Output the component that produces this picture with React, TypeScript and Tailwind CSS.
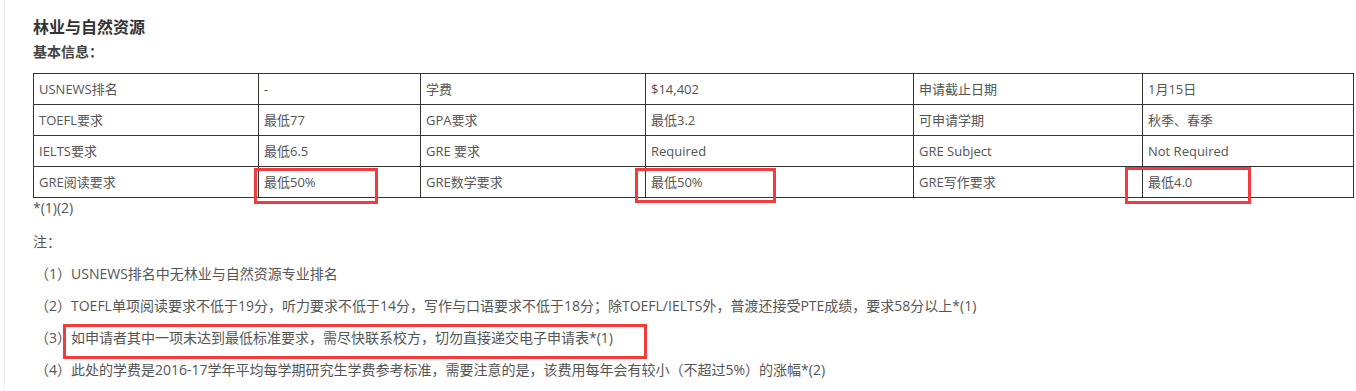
import React from "react";

const font = '"Open Sans", "Noto Sans CJK SC", sans-serif';

type Cell = { text: string; box?: { left: number; top: number; width: number; height: number } };

const rows: Cell[][] = [
  [{ text: "USNEWS排名" }, { text: "-" }, { text: "学费" }, { text: "$14,402" }, { text: "申请截止日期" }, { text: "1月15日" }],
  [{ text: "TOEFL要求" }, { text: "最低77" }, { text: "GPA要求" }, { text: "最低3.2" }, { text: "可申请学期" }, { text: "秋季、春季" }],
  [{ text: "IELTS要求" }, { text: "最低6.5" }, { text: "GRE 要求" }, { text: "Required" }, { text: "GRE Subject" }, { text: "Not Required" }],
  [
    { text: "GRE阅读要求" },
    { text: "最低50%", box: { left: -5, top: 1, width: 124, height: 36 } },
    { text: "GRE数学要求" },
    { text: "最低50%", box: { left: -11, top: 1, width: 141, height: 35 } },
    { text: "GRE写作要求" },
    { text: "最低4.0", box: { left: -18, top: 0, width: 126, height: 37 } },
  ],
];

const widths = [225, 162, 225, 268, 229, 211];

export default function App() {
  return (
    <div className="w-[1356px] h-[391px] bg-white overflow-hidden" style={{ fontFamily: font }}>
      <div className="ml-[4px] h-full border-l border-[#eeeeee] pl-[28px]">
        <h1 className="pt-[15px] text-[16px] leading-[24px] font-bold text-[#333333]">林业与自然资源</h1>
        <div className="mt-[3px] text-[14px] leading-[20px] font-bold text-[#444444]">基本信息：</div>
        <table className="mt-[11px] table-fixed border-collapse w-[1320px] text-[13px] text-[#555555]">
          <colgroup>
            {widths.map((w, i) => (
              <col key={i} style={{ width: w }} />
            ))}
          </colgroup>
          <tbody>
            {rows.map((r, ri) => (
              <tr key={ri}>
                {r.map((c, ci) => (
                  <td key={ci} className="relative h-[31px] border border-[#333333] px-[5px] py-0 align-middle leading-[20px]">
                    {c.text}
                    {c.box && (
                      <span
                        className="absolute border-[3px] border-[#f03c3c] pointer-events-none"
                        style={{ left: c.box.left, top: c.box.top, width: c.box.width, height: c.box.height }}
                      />
                    )}
                  </td>
                ))}
              </tr>
            ))}
          </tbody>
        </table>
        <div className="text-[14px] leading-[20px] text-[#555555]">*(1)(2)</div>
        <div className="mt-[14px] flex flex-col gap-[12px] text-[14px] leading-[20px] text-[#555555]">
          <p>注：</p>
          <p className="pl-[2px]">（1）USNEWS排名中无林业与自然资源专业排名</p>
          <p className="pl-[2px]">（2）TOEFL单项阅读要求不低于19分，听力要求不低于14分，写作与口语要求不低于18分；除TOEFL/IELTS外，普渡还接受PTE成绩，要求58分以上*(1)</p>
          <p className="relative pl-[2px]">
            （3）如申请者其中一项未达到最低标准要求，需尽快联系校方，切勿直接递交电子申请表*(1)
            <span className="absolute left-[30px] top-[-4px] w-[584px] h-[35px] border-[3px] border-[#f03c3c] bg-transparent" />
          </p>
          <p className="pl-[2px]">（4）此处的学费是2016-17学年平均每学期研究生学费参考标准，需要注意的是，该费用每年会有较小（不超过5%）的涨幅*(2)</p>
        </div>
      </div>
    </div>
  );
}
